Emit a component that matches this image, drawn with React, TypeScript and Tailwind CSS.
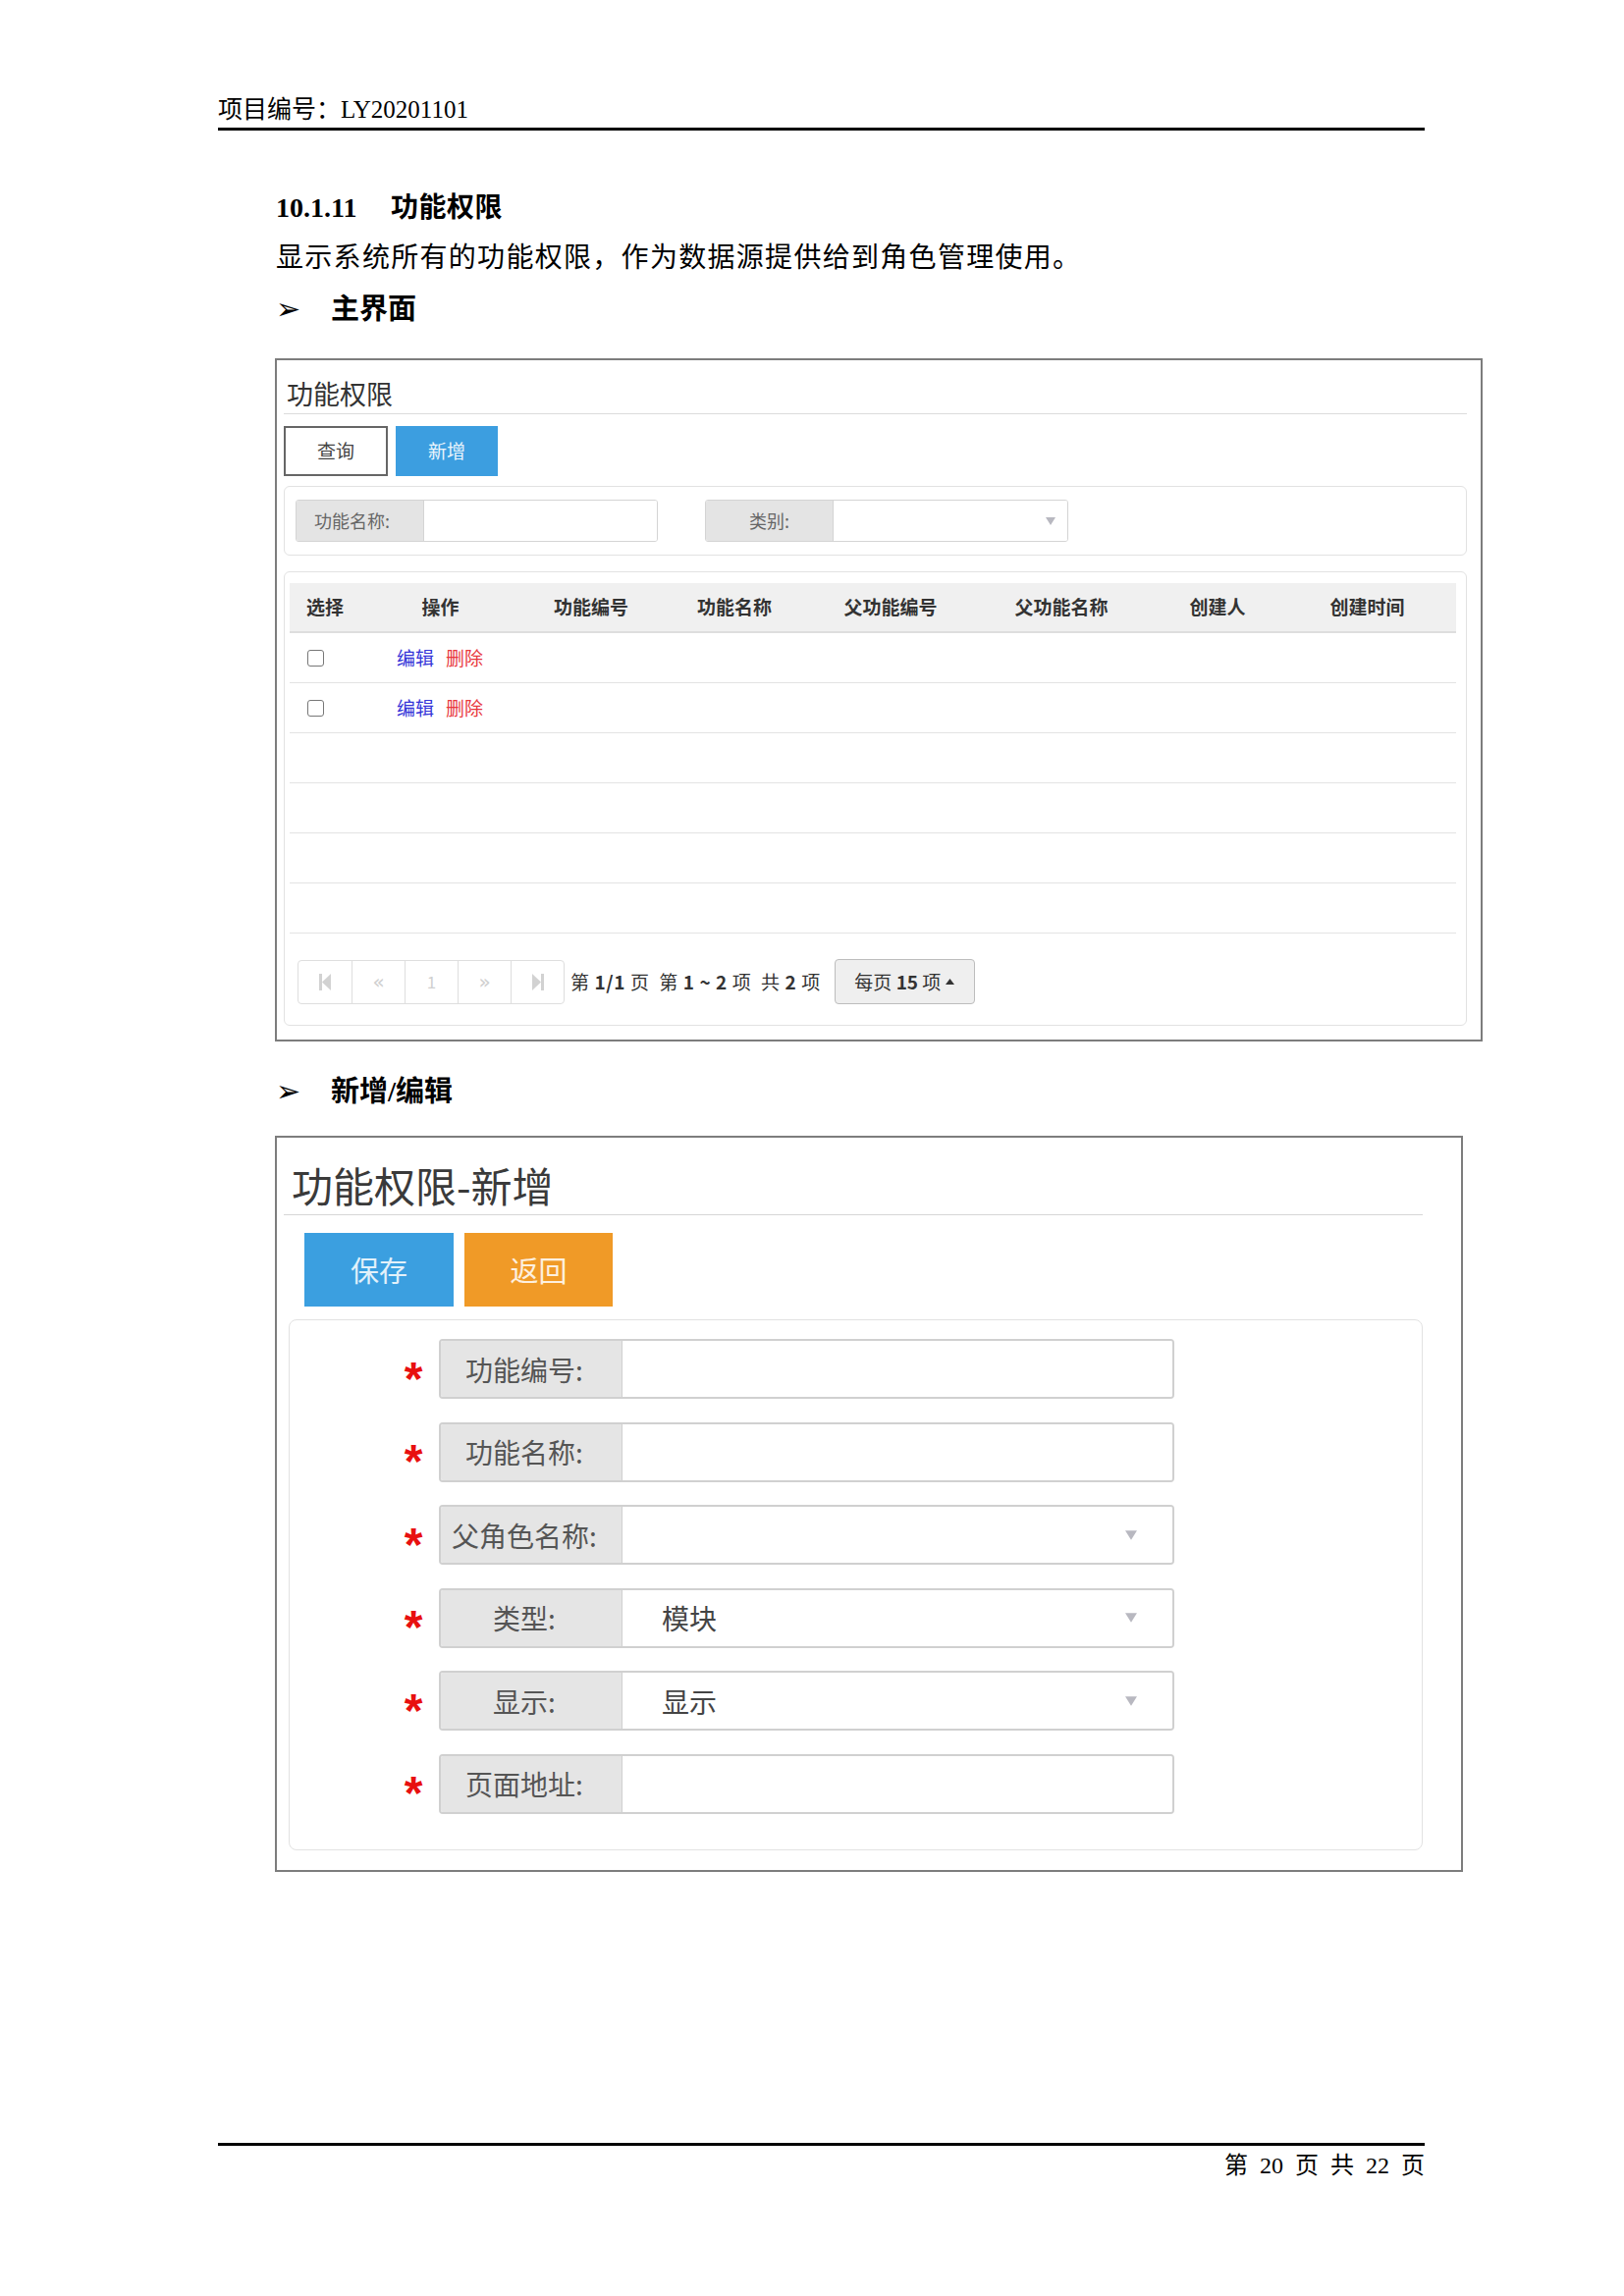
import type { ReactNode } from 'react'

const docFont = "font-['Liberation_Serif','Noto_Sans_CJK_SC',serif]"
const uiFont = "font-['Noto_Sans_CJK_SC','Liberation_Sans',sans-serif]"

const columns = ['选择', '操作', '功能编号', '功能名称', '父功能编号', '父功能名称', '创建人', '创建时间']

const formRows: { label: string; value?: string; select?: boolean }[] = [
  { label: '功能编号:' },
  { label: '功能名称:' },
  { label: '父角色名称:', select: true },
  { label: '类型:', value: '模块', select: true },
  { label: '显示:', value: '显示', select: true },
  { label: '页面地址:' },
]

function Bullet({ children }: { children: ReactNode }) {
  return (
    <div className="flex items-center h-[34px] pl-[281px]">
      <span className="font-['DejaVu_Sans',sans-serif] text-[30px] leading-none text-black w-[56px]">➢</span>
      <span className="text-[29px] font-bold text-black leading-[34px]">{children}</span>
    </div>
  )
}

function Caret({ className }: { className: string }) {
  return (
    <svg className={className} viewBox="0 0 10 8" fill="#b8b8c0">
      <path d="M0 0h10L5 8z" />
    </svg>
  )
}

function PagerIcon({ kind }: { kind: 'first' | 'prev' | 'one' | 'next' | 'last' }) {
  if (kind === 'one') return <span className="text-[17px] text-[#d0d0d0]">1</span>
  if (kind === 'prev') return <span className="text-[20px] text-[#d0d0d0] font-['DejaVu_Sans',sans-serif]">«</span>
  if (kind === 'next') return <span className="text-[20px] text-[#d0d0d0] font-['DejaVu_Sans',sans-serif]">»</span>
  return (
    <svg width="12" height="17" viewBox="0 0 12 17" fill="#d2d2d2">
      {kind === 'first' ? (
        <>
          <rect x="0" y="0" width="3" height="17" />
          <path d="M12 0v17L3 8.5z" />
        </>
      ) : (
        <>
          <path d="M0 0v17l9-8.5z" />
          <rect x="9" y="0" width="3" height="17" />
        </>
      )}
    </svg>
  )
}

function MainScreen() {
  return (
    <div className={`ml-[280px] mt-[33px] w-[1230px] border-2 border-[#7d7d7d] ${uiFont}`}>
      <div className="ml-[7px] mr-[14px] pt-[17px] pb-[14px]">
        <div className="pl-[3px] text-[27px] leading-[34px] text-[#333]">功能权限</div>
        <div className="h-px bg-[#dcdcdc] mt-[3px]" />

        <div className="flex gap-[8px] mt-[12px]">
          <button className="w-[106px] h-[51px] border-2 border-[#666] bg-white text-[19px] text-[#444]">查询</button>
          <button className="w-[104px] h-[51px] bg-[#3c9ee0] text-[19px] text-white/90">新增</button>
        </div>

        <div className="mt-[10px] h-[71px] rounded-[6px] border border-[#e2e2e2] flex items-start gap-[48px] pl-[11px] pt-[13px]">
          <div className="flex h-[43px] w-[369px] rounded-[3px] border border-[#d4d4d4] overflow-hidden">
            <div className="w-[129px] bg-[#e4e4e4] flex items-center pl-[18px] text-[18px] text-[#666]">功能名称:</div>
            <div className="flex-1 bg-white border-l border-[#d4d4d4]" />
          </div>
          <div className="flex h-[43px] w-[370px] rounded-[3px] border border-[#d4d4d4] overflow-hidden">
            <div className="w-[129px] bg-[#e4e4e4] flex items-center justify-center text-[18px] text-[#666]">类别:</div>
            <div className="flex-1 bg-white border-l border-[#d4d4d4] flex items-center justify-end pr-[12px]">
              <Caret className="w-[10px] h-[8px]" />
            </div>
          </div>
        </div>

        <div className="mt-[16px] rounded-[6px] border border-[#e2e2e2] pl-[5px] pr-[10px] pt-[11px] pb-[21px]">
          <div className="grid grid-cols-[76px_155px_152px_140px_178px_170px_148px_157px] h-[51px] bg-[#f0f0f0] border-b-2 border-[#dedede] items-center text-[19px] font-bold text-[#333]">
            {columns.map((c, i) => (
              <div key={c} className={i === 0 ? 'pl-[17px]' : 'text-center'}>{c}</div>
            ))}
          </div>
          {[0, 1, 2, 3, 4, 5].map((r) => (
            <div key={r} className="grid grid-cols-[76px_155px_152px_140px_178px_170px_148px_157px] h-[51px] border-b border-[#e3e3e3] items-center">
              {r < 2 && (
                <>
                  <div className="pl-[18px]">
                    <div className="w-[17px] h-[17px] rounded-[3px] border-[1.5px] border-[#777] bg-white" />
                  </div>
                  <div className="pl-[33px] flex gap-[12px] text-[19px]">
                    <span className="text-[#3535d8]">编辑</span>
                    <span className="text-[#e8383d]">删除</span>
                  </div>
                </>
              )}
            </div>
          ))}

          <div className="mt-[26px] ml-[8px] flex items-center">
            <div className="flex h-[45px] rounded-[4px] border border-[#dedede]">
              {(['first', 'prev', 'one', 'next', 'last'] as const).map((k, i) => (
                <div key={k} className={`w-[54px] flex items-center justify-center ${i > 0 ? 'border-l border-[#dedede]' : ''}`}>
                  <PagerIcon kind={k} />
                </div>
              ))}
            </div>
            <div className="ml-[6px] text-[19px] text-[#333] whitespace-pre tracking-[0.6px]">
              第 <b>1/1</b> 页  第 <b>1 ~ 2</b> 项  共 <b>2</b> 项
            </div>
            <div className="ml-[14px] h-[46px] w-[143px] rounded-[4px] border border-[#bdbdbd] bg-[#efefef] flex items-center justify-center gap-[5px] text-[19px] text-[#333]">
              <span>每页 <b>15</b> 项</span>
              <svg width="9" height="6" viewBox="0 0 9 6" fill="#333"><path d="M0 6h9L4.5 0z" /></svg>
            </div>
          </div>
        </div>
      </div>
    </div>
  )
}

function EditScreen() {
  return (
    <div className={`ml-[280px] mt-[28px] w-[1210px] border-2 border-[#7d7d7d] ${uiFont}`}>
      <div className="ml-[7px] mr-[39px] pt-[24px] pb-[20px]">
        <div className="pl-[8px] text-[42px] leading-[48px] text-[#3a3a3a]">功能权限-新增</div>
        <div className="h-px bg-[#d6d6d6] mt-[6px]" />

        <div className="flex gap-[11px] ml-[21px] mt-[18px]">
          <button className="w-[152px] h-[75px] bg-[#3b9fe0] text-[29px] text-white/85">保存</button>
          <button className="w-[151px] h-[75px] bg-[#f09a27] text-[29px] text-white/85">返回</button>
        </div>

        <div className="ml-[5px] mt-[13px] rounded-[8px] border border-[#e2e2e2] pt-[19px] pb-[36px] flex flex-col gap-[23.5px]">
          {formRows.map((row) => (
            <div key={row.label} className="flex items-center pl-[111px]">
              <span className="w-[30px] text-center font-['Liberation_Sans',sans-serif] font-bold text-[48px] leading-none text-[#e81010] translate-y-[10px]">*</span>
              <div className="ml-[11px] flex h-[61px] w-[749px] rounded-[4px] border-2 border-[#d0d0d0] overflow-hidden">
                <div className="w-[185px] bg-[#e5e5e5] flex items-center justify-center pr-[14px] text-[28px] text-[#555] border-r border-[#d0d0d0]">
                  {row.label}
                </div>
                <div className="flex-1 bg-white flex items-center pl-[40px] pr-[36px] text-[28px] text-[#444]">
                  <span className="flex-1">{row.value ?? ''}</span>
                  {row.select && <Caret className="w-[12px] h-[10px]" />}
                </div>
              </div>
            </div>
          ))}
        </div>
      </div>
    </div>
  )
}

export default function App() {
  return (
    <div className={`w-[1654px] h-[2339px] bg-white flex flex-col ${docFont} text-black`}>
      <div className="pl-[222px] mt-[99px] text-[25px] leading-[26px]">项目编号：LY20201101</div>
      <div className="ml-[222px] mt-[5px] w-[1229px] h-[3px] bg-black" />

      <div className="mt-[62px] pl-[281px] flex items-center h-[34px] text-[28px] font-bold">
        <span className="w-[117px]">10.1.11</span>
        <span className="tracking-[0.5px]">功能权限</span>
      </div>
      <div className="mt-[17px] pl-[281px] text-[28px] leading-[34px] tracking-[1.3px]">
        显示系统所有的功能权限，作为数据源提供给到角色管理使用。
      </div>
      <div className="mt-[18px]">
        <Bullet>主界面</Bullet>
      </div>

      <MainScreen />

      <div className="mt-[34px]">
        <Bullet>新增/编辑</Bullet>
      </div>

      <EditScreen />

      <div className="mt-auto pb-[119px]">
        <div className="ml-[222px] w-[1229px] h-[3px] bg-black" />
        <div className="mt-[6px] w-[1451px] text-right text-[24px] leading-[28px] whitespace-pre">第  20  页  共  22  页</div>
      </div>
    </div>
  )
}
